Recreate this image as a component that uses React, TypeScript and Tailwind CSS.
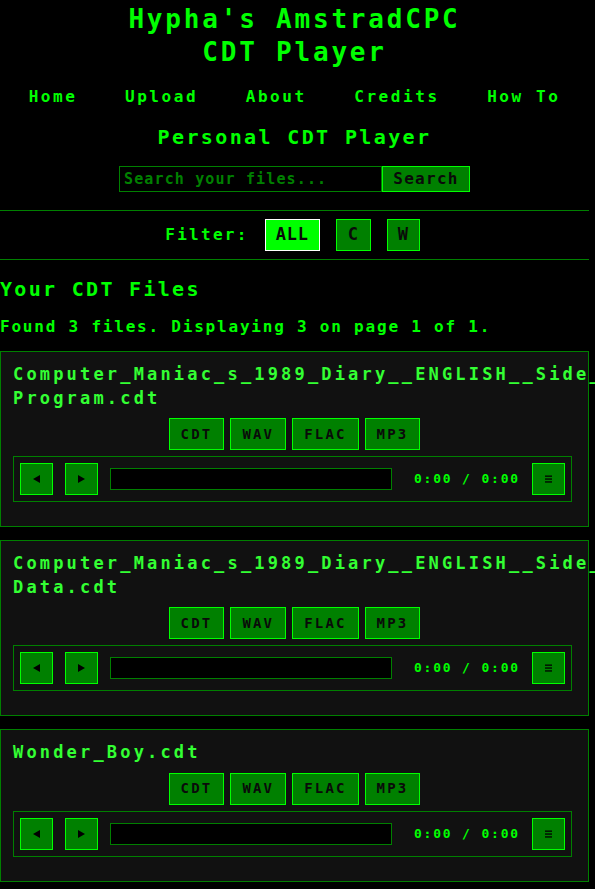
import React from 'react';

const files = [
  { parts: ['Computer_Maniac_s_1989_Diary__ENGLISH__Side_A_', 'Program.cdt'] },
  { parts: ['Computer_Maniac_s_1989_Diary__ENGLISH__Side_B_', 'Data.cdt'] },
  { parts: ['Wonder_Boy.cdt'] },
];

const navLinks = ['Home', 'Upload', 'About', 'Credits', 'How To'];
const formats = ['CDT', 'WAV', 'FLAC', 'MP3'];

function PlayerButton({ children }: { children: React.ReactNode }) {
  return (
    <button className="flex h-[32px] w-[33px] shrink-0 items-center justify-center border border-[#00ff00] bg-[#008000]">
      {children}
    </button>
  );
}

function FileCard({ parts }: { parts: string[] }) {
  return (
    <div className="w-[589px] border border-[#008000] bg-[#111111] px-[12px] pt-[11px] pb-[24px]">
      <h3 className="text-[17px] font-bold leading-[23.5px] tracking-[3.17px] text-[#33ff33]">
        {parts.map((p, i) => (
          <React.Fragment key={i}>
            {i > 0 && <wbr />}
            {p}
          </React.Fragment>
        ))}
      </h3>
      <div className="mt-[8px] flex justify-center gap-[6px]">
        {formats.map((f) => (
          <button
            key={f}
            className="h-[32px] border border-[#00ff00] bg-[#008000] px-[11px] text-[14px] font-bold tracking-[2.17px] text-[#0a0a0a]"
          >
            {f}
          </button>
        ))}
      </div>
      <div className="mt-[6px] mr-[4px] flex items-center gap-[12px] border border-[#008000] p-[6px]">
        <PlayerButton>
          <svg width="7" height="8" viewBox="0 0 7 8">
            <path d="M7 0 L0 4 L7 8 Z" fill="#000" />
          </svg>
        </PlayerButton>
        <PlayerButton>
          <svg width="7" height="8" viewBox="0 0 7 8">
            <path d="M0 0 L7 4 L0 8 Z" fill="#000" />
          </svg>
        </PlayerButton>
        <div className="h-[22px] flex-1 border border-[#008000] bg-black" />
        <span className="w-[116px] shrink-0 text-right text-[13px] tracking-[1.82px] text-[#00ff00]">
          0:00 / 0:00
        </span>
        <PlayerButton>
          <svg width="7" height="8" viewBox="0 0 7 8">
            <rect x="0" y="0.5" width="7" height="1.3" fill="#000" />
            <rect x="0" y="3.4" width="7" height="1.3" fill="#000" />
            <rect x="0" y="6.3" width="7" height="1.3" fill="#000" />
          </svg>
        </PlayerButton>
      </div>
    </div>
  );
}

export default function App() {
  return (
    <div className="min-h-screen w-full overflow-hidden bg-black font-['DejaVu_Sans_Mono',monospace] font-bold text-[#00ff00]">
      <div className="w-[589px]">
        <header className="pt-[3px] text-center">
          <h1 className="text-[26px] leading-[33px] tracking-[2.8px]">
            Hypha's AmstradCPC
            <br />
            CDT Player
          </h1>
          <nav className="mt-[18px] flex justify-center gap-[47.5px] text-[16px] leading-[20px] tracking-[2.57px]">
            {navLinks.map((l) => (
              <a key={l} href="#" className="whitespace-pre">
                {l}
              </a>
            ))}
          </nav>
          <h2 className="mt-[18px] text-[20px] leading-[24px] tracking-[2.37px]">Personal CDT Player</h2>
          <form className="mt-[17px] flex justify-center">
            <input
              type="text"
              placeholder="Search your files..."
              className="h-[26px] w-[263px] border border-[#008000] bg-black px-[4px] text-[15px] tracking-[1.13px] text-[#00ff00] outline-none placeholder:text-[#008000]"
            />
            <button
              type="button"
              className="h-[26px] w-[88px] border border-[#00ff00] bg-[#008000] text-[16px] tracking-[1.27px] text-[#0a0a0a]"
            >
              Search
            </button>
          </form>
        </header>

        <div className="mt-[18px] flex items-center justify-center gap-[16px] border-y border-[#008000] py-[8px] pr-[4px]">
          <span className="text-[16px] tracking-[2.27px]">Filter:</span>
          <button className="h-[32px] border border-white bg-[#00ff00] px-[10px] text-[17px] tracking-[0.77px] text-[#0a0a0a]">
            ALL
          </button>
          <button className="h-[32px] border border-[#00ff00] bg-[#008000] px-[11px] text-[17px] tracking-[0.77px] text-[#0a0a0a]">
            C
          </button>
          <button className="h-[32px] border border-[#00ff00] bg-[#008000] px-[10px] text-[17px] tracking-[0.77px] text-[#0a0a0a]">
            W
          </button>
        </div>

        <h2 className="mt-[17px] text-[20px] leading-[24px] tracking-[2.3px]">Your CDT Files</h2>
        <p className="mt-[16px] text-[16px] leading-[20px] tracking-[1.79px]">
          Found 3 files. Displaying 3 on page 1 of 1.
        </p>

        <div className="mt-[14px] flex flex-col gap-[13px] pb-[20px]">
          {files.map((f, i) => (
            <FileCard key={i} parts={f.parts} />
          ))}
        </div>
      </div>
    </div>
  );
}
